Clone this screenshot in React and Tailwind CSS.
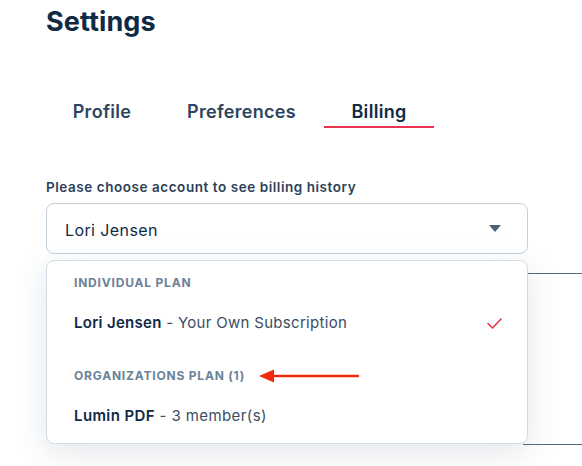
import React from "react";

const TABS = [
  { name: "Profile", w: "w-[114px]" },
  { name: "Preferences", w: "w-[165px]" },
  { name: "Billing", w: "w-[110px]" },
];

function Caret() {
  return (
    <svg width="12" height="7" viewBox="0 0 12 7" className="text-[#4a6079]">
      <path d="M0 0h12L6 7z" fill="currentColor" />
    </svg>
  );
}

function Check() {
  return (
    <svg width="15" height="11" viewBox="0 0 15 11" fill="none">
      <path d="M1 5.5l4.5 4.5L14 1" stroke="#e8334f" strokeWidth="1.6" strokeLinecap="round" strokeLinejoin="round" />
    </svg>
  );
}

function Arrow() {
  return (
    <svg width="100" height="14" viewBox="0 0 100 14">
      <path d="M14 7H100" stroke="#f22a0c" strokeWidth="2.4" />
      <path d="M0 7L15 0.5V13.5z" fill="#f22a0c" />
    </svg>
  );
}

export default function App() {
  const [tab] = React.useState("Billing");

  return (
    <div className="w-[582px] h-[466px] overflow-hidden bg-white text-[#0f2a44]" style={{ fontFamily: "Inter, 'Noto Sans', sans-serif" }}>
      <div className="pl-[46px] pt-[5px]">
        <h1 className="text-[27px] font-bold leading-[34px] tracking-[0.1px]">Settings</h1>
      </div>

      {/* tabs */}
      <div className="flex pl-[45px] mt-[61px]">
        {TABS.map(t => (
          <div key={t.name} className={t.w + " flex flex-col items-center"}>
            <span className={"text-[18px] font-semibold leading-[24px] tracking-[0.3px] " + (t.name === tab ? "text-[#0f2a44]" : "text-[#2d4560]")}>{t.name}</span>
            <div className={"mt-[2px] h-[2px] w-full " + (t.name === tab ? "bg-[#e8334f]" : "bg-transparent")} />
          </div>
        ))}
      </div>

      <div className="pl-[46px] pr-[54px] mt-[50px]">
        <p className="text-[13.5px] font-semibold text-[#2c4058] leading-[18px] tracking-[0.55px]">Please choose account to see billing history</p>

        <div className="relative mt-[7px]">
          <div className="h-[51px] rounded-[8px] border border-[#c4d0db] flex items-center justify-between pl-[18px] pr-[26px]">
            <span className="text-[16px] tracking-[0.4px] text-[#0f2a44] pt-[2px]">Lori Jensen</span>
            <Caret />
          </div>

          {/* underlying content peeking out at the right */}
          <div className="absolute left-[482px] top-[70px] w-[60px] h-px bg-[#4d6a84]" />
          <div className="absolute left-[477px] top-[241px] w-[60px] h-px bg-[#4d6a84]" />

          {/* dropdown */}
          <div className="absolute left-0 right-0 top-[57px] h-[184px] rounded-[8px] border border-[#d3dde6] bg-white shadow-[0_8px_32px_rgba(40,70,100,0.14)] pl-[27px] pr-[27px]">
            <div className="pt-[14px] text-[12px] font-bold tracking-[0.8px] text-[#6b8299] leading-[16px]">INDIVIDUAL PLAN</div>
            <div className="mt-[22px] flex items-center justify-between text-[15px] leading-[20px] tracking-[0.3px]">
              <span>
                <span className="font-semibold text-[#0f2a44]">Lori Jensen</span>
                <span className="text-[#3a4d63]"> - Your Own Subscription</span>
              </span>
              <span className="mr-[-2px]"><Check /></span>
            </div>
            <div className="mt-[35px] flex items-center">
              <span className="text-[12px] font-bold tracking-[0.8px] text-[#6b8299] leading-[16px]">ORGANIZATIONS PLAN (1)</span>
              <span className="ml-[14px]"><Arrow /></span>
            </div>
            <div className="mt-[22px] text-[15px] leading-[20px] tracking-[0.4px]">
              <span className="font-semibold text-[#0f2a44]">Lumin PDF</span>
              <span className="text-[#3a4d63]"> - 3 member(s)</span>
            </div>
          </div>
        </div>
      </div>
    </div>
  );
}
